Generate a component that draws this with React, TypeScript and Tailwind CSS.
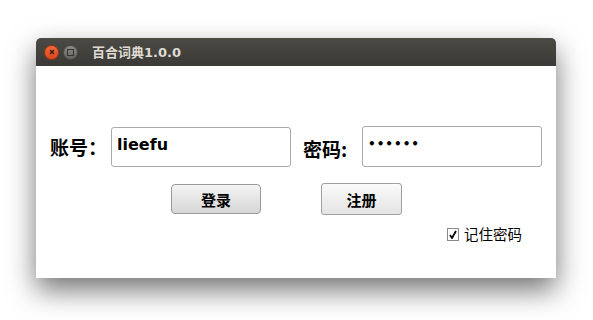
import { useState } from "react";

const cjk = "font-['Noto_Sans_CJK_SC','DejaVu_Sans',sans-serif]";

const TitleBar = () => (
  <div className="h-[28px] rounded-t-[5px] bg-gradient-to-b from-[#4b4a45] to-[#3a3935] flex flex-row items-center pl-[8px]">
    <div className="w-[15px] h-[15px] rounded-full bg-gradient-to-b from-[#f0693a] to-[#d9471b] border border-[#9e3512] flex items-center justify-center">
      <svg width="6" height="6" viewBox="0 0 6 6">
        <path d="M1 1L5 5M5 1L1 5" stroke="#3a1408" strokeWidth="1.3" />
      </svg>
    </div>
    <div className="ml-[4px] w-[15px] h-[15px] rounded-full bg-gradient-to-b from-[#8d8c88] to-[#63625e] border border-[#4a4945] flex items-center justify-center">
      <div className="w-[7px] h-[7px] border border-[#36352f]" />
    </div>
    <div className="ml-[14px] text-[13px] font-bold text-[#dfdbd2] font-['DejaVu_Sans','Noto_Sans_CJK_SC',sans-serif] leading-none">
      百合词典1.0.0
    </div>
  </div>
);

const App = () => {
  const [user, setUser] = useState("lieefu");
  const [pwd, setPwd] = useState("123456");
  const [remember, setRemember] = useState(true);

  return (
    <div className="w-[593px] h-[320px] bg-white pt-[38px] pl-[36px] overflow-hidden">
      <div className="w-[520px] h-[240px] bg-white rounded-t-[5px] shadow-[0_12px_28px_rgba(0,0,0,0.55)] flex flex-col">
        <TitleBar />
        <div className="flex-1 flex flex-col">
          <div className="mt-[60px] flex flex-row items-center pl-[14px]">
            <span className={`${cjk} text-[19px] font-bold text-black w-[61px] leading-none`}>
              账号：
            </span>
            <input
              type="text"
              value={user}
              onChange={(e) => setUser(e.target.value)}
              className="w-[180px] h-[40px] border border-[#a9a9a9] rounded-[3px] px-[5px] pb-[5px] text-[16px] font-bold text-black font-['DejaVu_Sans',sans-serif] outline-none"
            />
            <span className={`${cjk} ml-[12px] text-[19px] font-bold text-black w-[59px] leading-none pt-[3px]`}>
              密码:
            </span>
            <input
              type="password"
              value={pwd}
              onChange={(e) => setPwd(e.target.value)}
              className="w-[180px] h-[41px] border border-[#a9a9a9] rounded-[3px] pl-[5px] pb-[5px] text-[12px] font-bold text-black font-['DejaVu_Sans',sans-serif] tracking-[1px] outline-none"
            />
          </div>
          <div className="mt-[16px] flex flex-row items-center">
            <button
              className={`${cjk} ml-[135px] w-[90px] h-[30px] rounded-[4px] border border-[#9a9a9a] bg-gradient-to-b from-[#f4f4f4] to-[#d6d6d6] text-[15px] font-bold text-black leading-none`}
            >
              登录
            </button>
            <button
              className={`${cjk} ml-[60px] w-[81px] h-[32px] rounded-[3px] border border-[#a0a0a0] bg-gradient-to-b from-[#fafafa] to-[#e4e4e4] text-[15px] font-bold text-black leading-none`}
            >
              注册
            </button>
          </div>
          <div className="mt-[12px] flex flex-row items-center pl-[411px]">
            <button
              onClick={() => setRemember(!remember)}
              className="w-[12px] h-[13px] border border-[#8a8a8a] bg-white flex items-center justify-center"
            >
              {remember && (
                <svg width="8" height="9" viewBox="0 0 8 9">
                  <path d="M1 5L3 8L7 1" stroke="#000" strokeWidth="1.8" fill="none" />
                </svg>
              )}
            </button>
            <span className={`${cjk} ml-[5px] text-[14.5px] text-black leading-none`}>记住密码</span>
          </div>
        </div>
      </div>
    </div>
  );
};

export default App;
